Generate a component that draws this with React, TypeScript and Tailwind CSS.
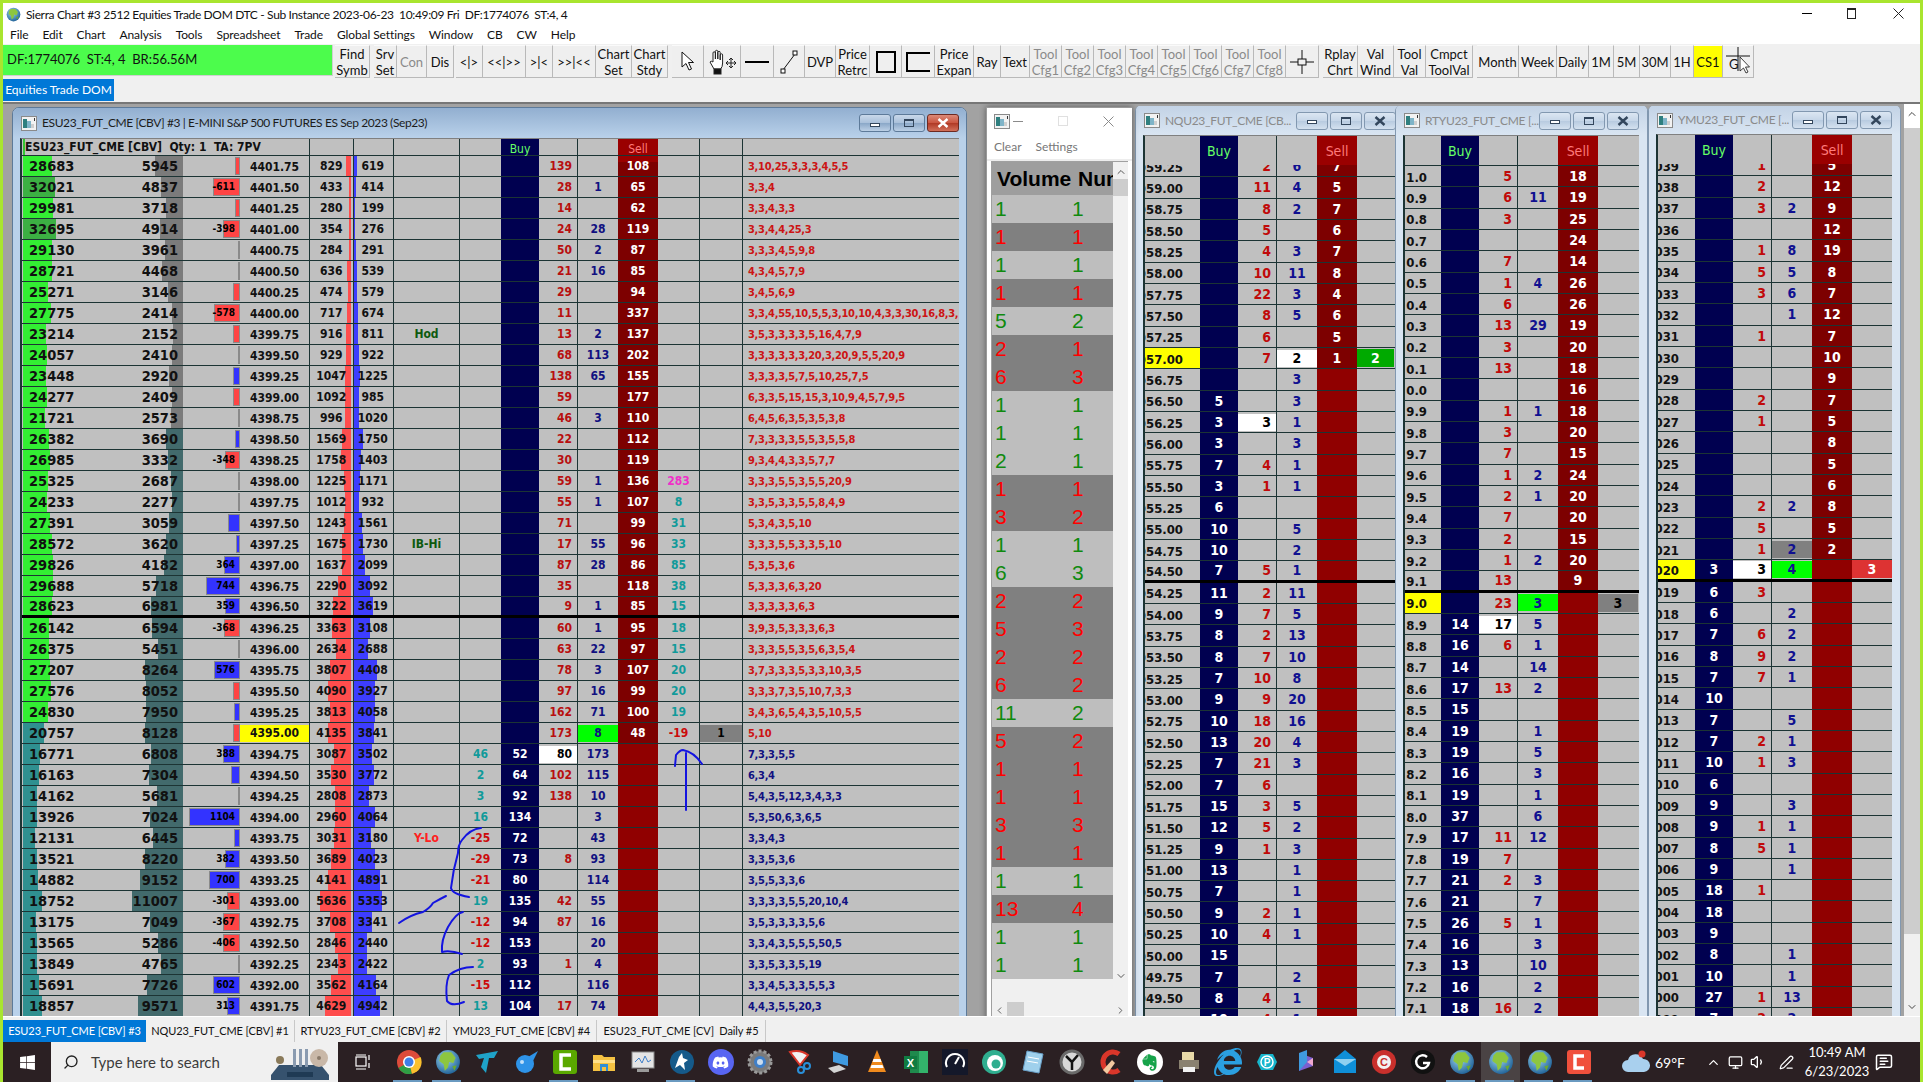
import React from "react";
import { FaWindows, FaDiscord, FaEvernote, FaInternetExplorer } from "react-icons/fa";
import { Search, ChevronUp, ChevronDown, ChevronLeft, ChevronRight, Volume1, Monitor, MessageSquareText, PenLine } from "lucide-react";

const mainRows = [
"28683|5945||r5|4401.75|829|619||||139||108|||3,10,25,3,3,3,4,5,5",
"32021|4837|-611|r27|4401.50|433|414||||28|1|65|||3,3,4",
"29981|3718||r5|4401.25|280|199||||14||62|||3,3,4,3,3",
"32695|4914|-398|r17|4401.00|354|276||||24|28|119|||3,3,4,4,25,3",
"29130|3961||b1|4400.75|284|291||||50|2|87|||3,3,3,4,5,9,8",
"28721|4468||r1|4400.50|636|539||||21|16|85|||4,3,4,5,7,9",
"25271|3146||r7|4400.25|474|579||||29||94|||3,4,5,6,9",
"27775|2414|-578|r26|4400.00|717|674||||11||337|||3,3,4,55,10,5,5,3,10,10,4,3,3,30,16,8,3,",
"23214|2152||r7|4399.75|916|811|Hod|||13|2|137|||3,5,3,3,3,3,5,16,4,7,9",
"24057|2410||r1|4399.50|929|922||||68|113|202|||3,3,3,3,3,3,20,3,20,9,5,5,20,9",
"23448|2920||b7|4399.25|1047|1225||||138|65|155|||3,3,3,3,5,7,5,10,25,7,5",
"24277|2409||r7|4399.00|1092|985||||59||177|||6,3,3,5,15,15,3,10,9,4,5,7,9,5",
"21721|2573||r1|4398.75|996|1020||||46|3|110|||6,4,5,6,3,5,3,5,3,8",
"26382|3690||b5|4398.50|1569|1750||||22||112|||7,3,3,3,3,5,5,3,5,5,8",
"26985|3332|-348|r15|4398.25|1758|1403||||30||119|||9,3,4,4,3,3,5,7,7",
"25325|2687||r1|4398.00|1225|1171||||59|1|136|283||3,3,3,5,5,3,5,5,20,9",
"24233|2277||r1|4397.75|1012|932||||55|1|107|8||3,3,5,3,3,5,5,8,4,9",
"27391|3059||b12|4397.50|1243|1561||||71||99|31||5,3,4,3,5,10",
"28572|3620||b4|4397.25|1675|1730|IB-Hi|||17|55|96|33||3,3,3,5,5,3,3,5,10",
"29826|4182|364|b16|4397.00|1637|2099||||87|28|86|85||5,3,5,3,6",
"29688|5718|744|b34|4396.75|2290|3092||||35||118|38||5,3,3,3,6,3,20",
"28623|6981|359|b15|4396.50|3222|3619||||9|1|85|15||3,3,3,3,3,6,3",
"26142|6594|-368|r16|4396.25|3363|3108||||60|1|95|18||3,9,3,5,3,3,3,6,3",
"26375|5451||b1|4396.00|2634|2688||||63|22|97|15||3,3,3,5,5,3,5,6,3,5,4",
"27207|8264|576|b26|4395.75|3807|4408||||78|3|107|20||3,7,3,3,3,5,3,3,10,3,5",
"27576|8052||r7|4395.50|4090|3927||||97|16|99|20||3,3,3,7,3,5,10,7,3,3",
"24830|7950||b6|4395.25|3813|4058||||162|71|100|19||3,4,3,6,5,4,3,5,10,5,5",
"20757|8128||r7|*4395.00|4135|3841||||173|g8|48|-19|x1|5,10",
"16771|6808|388|b17|4394.75|3087|3502||46|52|w80|173||||7,3,3,5,5",
"16163|7304||b9|4394.50|3530|3772||2|64|102|115||||6,3,4",
"14162|5681||r1|4394.25|2808|2873||3|92|138|10||||5,4,3,5,12,3,4,3,3",
"13926|7024|1104|b51|4394.00|2960|4064||16|134||3||||5,3,50,6,3,6,5",
"12131|6445||b6|4393.75|3031|3180|Y-Lo|-25|72||43||||3,3,4,3",
"13521|8220|382|b15|4393.50|3689|4023||-29|73|8|93||||3,3,5,3,6",
"14882|9152|700|b31|4393.25|4141|4891||-21|80||114||||3,5,5,3,3,6",
"18752|11007|-301|r13|4393.00|5636|5353||19|135|42|55||||3,3,3,3,5,5,20,10,4",
"13175|7049|-367|r17|4392.75|3708|3341||-12|94|87|16||||3,5,3,3,3,3,5,6",
"13565|5286|-406|r17|4392.50|2846|2440||-12|153||20||||3,3,4,3,5,5,5,50,5",
"13849|4765||b1|4392.25|2343|2422||2|93|1|4||||3,3,5,3,3,5,19",
"15691|7726|602|b27|4392.00|3562|4164||-15|112||116||||3,3,4,5,3,3,5,5,3",
"18857|9571|313|b13|4391.75|4629|4942||13|104|17|74||||4,4,3,5,5,20,3",
"||||||||||||||||",
];

const nq = ["059.25||2|6|7|","059.00||11|4|5|","058.75||8|2|7|","058.50||5||6|","058.25||4|3|7|","058.00||10|11|8|","057.75||22|3|4|","057.50||8|5|6|","057.25||6||5|","*057.00||7|w2|1|G2","056.75|||3||","056.50|5||3||","056.25|3|w3|1||","056.00|3||3||","055.75|7|4|1||","055.50|3|1|1||","055.25|6||||","055.00|10||5||","054.75|10||2||","054.50!|7|5|1||","054.25|11|2|11||","054.00|9|7|5||","053.75|8|2|13||","053.50|8|7|10||","053.25|7|10|8||","053.00|9|9|20||","052.75|10|18|16||","052.50|13|20|4||","052.25|7|21|3||","052.00|7|6|||","051.75|15|3|5||","051.50|12|5|2||","051.25|9|1|3||","051.00|13||1||","050.75|7||1||","050.50|9|2|1||","050.25|10|4|1||","050.00|15||||","049.75|7||2||","049.50|8|4|1||","049.25|10|4|1||"];
const rty = ["1.0||5||18|","0.9||6|11|19|","0.8||3||25|","0.7||||24|","0.6||7||14|","0.5||1|4|26|","0.4||6||26|","0.3||13|29|19|","0.2||3||20|","0.1||13||18|","0.0||||16|","9.9||1|1|18|","9.8||3||20|","9.7||7||15|","9.6||1|2|24|","9.5||2|1|20|","9.4||7||20|","9.3||2||15|","9.2||1|2|20|","9.1!||13||9|","*9.0||23|g3||X3","8.9|14|w17|5||","8.8|16|6|1||","8.7|14||14||","8.6|17|13|2||","8.5|15||||","8.4|19||1||","8.3|19||5||","8.2|16||3||","8.1|19||1||","8.0|37||6||","7.9|17|11|12||","7.8|19|7|||","7.7|21|2|3||","7.6|21||7||","7.5|26|5|1||","7.4|16||3||","7.3|13||10||","7.2|16||2||","7.1|18|16|2||","7.0|15||||"];
const ym = ["039||1||5|","038||2||12|","037||3|2|9|","036||||12|","035||1|8|19|","034||5|5|8|","033||3|6|7|","032|||1|12|","031||1||7|","030||||10|","029||||9|","028||2||7|","027||1||5|","026||||8|","025||||5|","024||||6|","023||2|2|8|","022||5||5|","021||1|x2|2|","*020!|3|w3|g4||R3","019|6|3|||","018|6||2||","017|7|6|2||","016|8|9|2||","015|7|7|1||","014|10||||","013|7||5||","012|7|2|1||","011|10|1|3||","010|6||||","009|9||3||","008|9|1|1||","007|8|5|1||","006|9||1||","005|18|1|||","004|18||||","003|9||||","002|8||1||","001|10||1||","000|27|1|13||","999|7|2|2||"];

const volRows = "1 1 g,1 1 r,1 1 g,1 1 r,5 2 g,2 1 r,6 3 r,1 1 g,1 1 g,2 1 g,1 1 r,3 2 r,1 1 g,6 3 g,2 2 r,5 3 r,2 2 r,6 2 r,11 2 g,5 2 r,1 1 r,1 1 r,3 3 r,1 1 r,1 1 g,13 4 r,1 1 g,1 1 g".split(",").map((s) => s.split(" "));

const DATA = "font-['DejaVu_Sans_Condensed','DejaVu_Sans',sans-serif] font-bold";

const Globe = ({ s = 16 }: { s?: number }) => (
  <svg width={s} height={s} viewBox="0 0 24 24" className="flex-none">
    <defs>
      <radialGradient id="gl" cx="40%" cy="35%" r="70%">
        <stop offset="0" stopColor="#9fd8ef" />
        <stop offset="1" stopColor="#1d5f96" />
      </radialGradient>
    </defs>
    <circle cx="12" cy="12" r="11" fill="url(#gl)" />
    <path d="M8 3 L15 3 L19 8 L17 13 L13 12 L12 17 L9 20 L8 14 L4 11 L5 6Z" fill="#8dc63f" />
    <path d="M16 16 L20 15 L18 20Z" fill="#6aa82f" />
  </svg>
);

const DocIcon = () => (
  <svg width="16" height="15" viewBox="0 0 16 15" className="flex-none">
    <rect x="0.5" y="0.5" width="15" height="14" fill="#f2f2f2" stroke="#8a8a8a" />
    <rect x="2" y="3" width="4" height="9" fill="#2f7f7f" />
    <rect x="6" y="5" width="4" height="7" fill="#7fb4c8" />
    <rect x="10" y="8" width="3" height="4" fill="#cfcfcf" />
    <rect x="13" y="2" width="1" height="3" fill="#333" />
  </svg>
);

function WinBtns({ active }: { active?: boolean }) {
  const base = "w-[32px] h-[18px] rounded-[3px] border flex items-center justify-center";
  const plain = active
    ? "border-[#5d7a99] bg-[linear-gradient(to_bottom,#c9d8ea_0%,#a9c0da_50%,#8ba8c8_52%,#bcd0e6_100%)]"
    : "border-[#8298b0] bg-[linear-gradient(to_bottom,#dbe6f2_0%,#c6d6e8_50%,#b8cbe0_52%,#d4e1ef_100%)]";
  const close = active
    ? "border-[#6d2a22] bg-[linear-gradient(to_bottom,#dc8a78_0%,#c9543f_50%,#b03a26_52%,#d2705a_100%)]"
    : plain;
  return (
    <div className="flex gap-[2px] flex-none">
      <div className={`${base} ${plain}`}><div className="w-[10px] h-[4px] border border-[#33465c] bg-white mt-[3px]" /></div>
      <div className={`${base} ${plain}`}><div className="w-[10px] h-[8px] border border-[#33465c] border-t-2" /></div>
      <div className={`${base} ${close}`}>
        <svg width="12" height="10" viewBox="0 0 12 10"><path d="M1.5 1 L10.5 9 M10.5 1 L1.5 9" stroke={active ? "#fff" : "#33465c"} strokeWidth="2.4" /></svg>
      </div>
    </div>
  );
}

function MainRow({ r, i }: { r: string; i: number }) {
  const f = r.split("|");
  const [bid, ask, lab, bar, price, v1, v2, note, c5, buy, tb, ta, sell, c11, c12, text] = f;
  const above = i < 28;
  const thick = i === 21;
  const line = "border-r border-[#1c3434]";
  const greenCl = i === 1 || i === 3 ? "bg-[#3cb043]" : i < 27 ? "bg-[#33ee33]" : "bg-[#2f9090]";
  const grayCl = i < 13 ? "bg-[#7b7b7b]" : "bg-[#426a6c]";
  const barW = bar ? Number(bar.slice(1)) : 0;
  const bidN = Number(bid) || 0;
  const askN = Number(ask) || 0;
  const v1N = Number(v1) || 0;
  const v2N = Number(v2) || 0;
  const yellow = price.startsWith("*");
  const noteCl = note === "Y-Lo" ? "text-[#ff2020]" : "text-[#0f5a0f]";
  const c5Cl = c5.startsWith("-") ? "text-[#cc0a0a]" : "text-[#109a9a]";
  const c11Cl = c11 === "283" ? "text-[#f030c8]" : c11.startsWith("-") ? "text-[#cc0a0a]" : "text-[#109a9a]";
  const askGreen = ta.startsWith("g");
  const bidWhite = tb.startsWith("w");
  return (
    <div className={`flex h-[21px] flex-none ${thick ? "border-b-[3px] border-black" : "border-b border-[#1c3434]"} text-[12px] leading-none text-[#111]`}>
      <div className="relative w-[161px] flex-none flex justify-between items-center pl-[7px] pr-[5px] text-[14.5px]">
        <div className={`absolute left-[1px] top-0 bottom-0 ${greenCl}`} style={{ width: bidN / 1000 }} />
        <div className={`absolute right-0 top-0 bottom-0 ${grayCl}`} style={{ width: askN / 215 }} />
        <span className="relative">{bid}</span>
        <span className="relative">{ask}</span>
      </div>
      <div className="relative w-[57px] flex-none flex justify-end items-center pr-[5px] text-[10px] text-black">
        {bar && (
          <div className={`absolute right-0 top-[1px] bottom-[1px] border border-[#8a8a8a] ${bar[0] === "r" ? "bg-[#ff4444]" : "bg-[#3333ff]"}`} style={{ width: barW }} />
        )}
        <span className="relative">{lab}</span>
      </div>
      <div className="w-[69px] flex-none flex items-center justify-center pt-[2px]">
        {yellow ? <div className="w-full h-[17px] mb-[2px] bg-[#ffff00] flex items-center justify-center">{price.slice(1)}</div> : price}
      </div>
      <div className={`relative w-[85px] flex-none flex items-center ${line} border-l`}>
        {v1 && <div className="absolute right-[42px] top-0 bottom-0 bg-[#ff4d4d]" style={{ width: v1N / 180 }} />}
        {v2 && <div className="absolute left-[44px] top-0 bottom-0 bg-[#3d3dff]" style={{ width: v2N / 190 }} />}
        <div className="absolute left-[43px] top-0 bottom-0 w-px bg-[#1c3434]" />
        <span className="relative w-[43px] text-center">{v1}</span>
        <span className="relative w-[41px] text-center">{v2}</span>
      </div>
      <div className={`w-[66px] flex-none flex items-center justify-center ${line} ${noteCl}`}>{note}</div>
      <div className={`w-[41px] flex-none flex items-center justify-center ${c5Cl}`}>{c5}</div>
      <div className="w-[38px] flex-none flex items-center justify-center bg-[#000050] text-white">{buy}</div>
      <div className={`w-[39px] flex-none flex items-center justify-end ${line} text-[#b80f0f]`}>
        {bidWhite ? <div className="w-full h-[17px] bg-white text-black flex items-center justify-end pr-[5px]">{tb.slice(1)}</div> : <span className="pr-[5px]">{tb}</span>}
      </div>
      <div className="w-[40px] flex-none flex items-center justify-center text-[#101080]">
        {askGreen ? <div className="w-full h-[17px] bg-[#00ff00] flex items-center justify-center">{ta.slice(1)}</div> : ta}
      </div>
      <div className={`w-[40px] flex-none flex items-center justify-center text-white ${i === 0 ? "bg-[linear-gradient(to_bottom,#9a0000_6px,#7d0000_6px)]" : sell ? "bg-[#7d0000]" : "bg-[#900000]"}`}>{sell}</div>
      <div className={`w-[42px] flex-none flex items-center justify-center ${line} ${c11Cl}`}>{c11}</div>
      <div className={`w-[43px] flex-none flex items-center justify-center ${line}`}>
        {c12 && <div className="w-full h-[17px] bg-[#808080] text-black flex items-center justify-center">{c12.slice(1)}</div>}
      </div>
      <div className={`flex-1 min-w-0 pl-[5px] flex items-center overflow-hidden whitespace-nowrap text-[11px] tracking-[-0.3px] ${above ? "text-[#cc1414]" : "text-[#101080]"}`}>{text}</div>
    </div>
  );
}

function MainWindow() {
  return (
    <div className="absolute left-[9px] top-[3px] w-[955px] h-[911px] rounded-t-[7px] border border-[#5d7a99] bg-[#b9d1ea] flex flex-col overflow-hidden">
      <div className="h-[30px] flex-none flex items-center pl-[8px] pr-[7px] bg-[linear-gradient(to_bottom,#92afd0,#b9d1ea)]">
        <DocIcon />
        <span className="ml-[5px] text-[12px] tracking-[-0.4px] text-[#1c1c1c] whitespace-nowrap flex-1">ESU23_FUT_CME [CBV] #3 | E-MINI S&amp;P 500 FUTURES ES Sep 2023 (Sep23)</span>
        <WinBtns active />
      </div>
      <div className={`flex-1 min-h-0 ml-[7px] mr-[7px] border-l-2 border-t border-l-[#1c3434] border-t-[#808080] bg-[#c0c0c0] overflow-hidden ${DATA}`}>
        <div className="flex h-[17px] border-b border-[#1c3434] text-[12px] leading-none">
          <div className="w-[287px] flex-none flex items-center pl-[3px] text-[#111] whitespace-pre relative">
            <div className="absolute left-[1px] top-0 bottom-0 w-[2px] bg-[#33c733]" />
            ESU23_FUT_CME [CBV]  Qty: 1  TA: 7PV
          </div>
          <div className="w-[85px] flex-none border-x border-[#1c3434] relative"><div className="absolute left-[43px] top-0 bottom-0 w-px bg-[#1c3434]" /></div>
          <div className="w-[66px] flex-none border-r border-[#1c3434]" />
          <div className="w-[41px] flex-none" />
          <div className="w-[38px] flex-none bg-[#000050] flex items-end justify-center text-[#66ff66] font-normal pb-[0px]">Buy</div>
          <div className="w-[39px] flex-none border-r border-[#1c3434]" />
          <div className="w-[40px] flex-none" />
          <div className="w-[40px] flex-none bg-[#9a0000] flex items-end justify-center text-[#ff7a7a] font-normal">Sell</div>
          <div className="w-[42px] flex-none border-r border-[#1c3434]" />
          <div className="w-[43px] flex-none border-r border-[#1c3434]" />
        </div>
        {mainRows.map((r, i) => <MainRow key={i} r={r} i={i} />)}
      </div>
    </div>
  );
}

type DomProps = {
  pos: string;
  title: string;
  titleH: string;
  priceW: string;
  pricePr: string;
  headH: string;
  clip: string;
  rows: string[];
  prefix: string;
  lastW: string;
};

function DomRow({ r, p }: { r: string; p: DomProps }) {
  const [rawPrice, buy, bid, ask, sell, last] = r.split("|");
  const thick = rawPrice.endsWith("!");
  const yellow = rawPrice.startsWith("*");
  const price = rawPrice.replace("!", "").replace("*", "");
  const askCl = ask.startsWith("g") ? "bg-[#00ff00] h-[17px] w-full" : ask.startsWith("x") ? "bg-[#808080] h-[17px] w-full" : "";
  const askV = ask.startsWith("g") || ask.startsWith("x") ? ask.slice(1) : ask;
  const lastCl = last.startsWith("G") ? "bg-[#00aa00] text-white" : last.startsWith("X") ? "bg-[#808080] text-black" : last.startsWith("R") ? "bg-[#dd3333] text-white" : "";
  return (
    <div className={`flex h-[21.33px] flex-none leading-none text-[14px] ${thick ? "border-b-[3px] border-black" : "border-b border-[#1c3434]"}`}>
      <div className={`${p.priceW} ${p.pricePr} flex-none flex justify-end items-center overflow-hidden whitespace-nowrap text-[#111] text-[13px] pt-[2px] ${yellow ? "bg-[#ffff00]" : ""}`}>{p.prefix}{price}</div>
      <div className="w-[38px] flex-none flex items-center justify-center bg-[#000050] text-white">{buy}</div>
      <div className="w-[39px] flex-none flex items-center justify-end border-r border-[#1c3434] text-[#c00a0a]">
        {bid.startsWith("w") ? <div className="w-full h-[17px] bg-white text-black flex items-center justify-end pr-[5px]">{bid.slice(1)}</div> : <span className="pr-[5px]">{bid}</span>}
      </div>
      <div className="w-[40px] flex-none flex items-center justify-center text-[#101090]">
        {askCl ? <div className={`${askCl} flex items-center justify-center`}>{askV}</div> : ask.startsWith("w") ? <div className="w-full h-[17px] bg-white text-black flex items-center justify-center">{ask.slice(1)}</div> : ask}
      </div>
      <div className={`w-[40px] flex-none flex items-center justify-center text-white ${sell ? "bg-[#7d0000]" : "bg-[#900000]"}`}>{sell}</div>
      <div className={`${p.lastW} flex-none flex items-center justify-center`}>
        {last && <div className={`w-full h-[18px] flex items-center justify-center ${lastCl}`}>{last.slice(1)}</div>}
      </div>
    </div>
  );
}

function DomWindow(p: DomProps) {
  return (
    <div className={`absolute ${p.pos} top-[2px] h-[912px] rounded-t-[5px] border-x border-[#8298b0] bg-[#d9e5f2] flex flex-col overflow-hidden`}>
      <div className={`${p.titleH} flex-none flex items-center pl-[8px] pr-[8px] bg-[linear-gradient(to_bottom,#c3d3e6,#d9e5f2)]`}>
        <DocIcon />
        <span className="ml-[5px] text-[12px] tracking-[-0.3px] text-[#8a8a8a] whitespace-nowrap flex-1 overflow-hidden">{p.title}</span>
        <WinBtns />
      </div>
      <div className={`flex-1 min-h-0 ml-[7px] mr-[8px] border-l-2 border-t border-l-[#1c3434] border-t-[#808080] bg-[#c0c0c0] overflow-hidden ${DATA}`}>
        <div className={`flex ${p.headH} flex-none text-[14px] relative z-10`}>
          <div className={`${p.priceW} flex-none bg-[#c0c0c0]`} />
          <div className="w-[38px] flex-none bg-[#000050] flex items-end justify-center pb-[3px] text-[#66ff66] font-normal">Buy</div>
          <div className="w-[39px] flex-none bg-[#c0c0c0] border-r border-[#1c3434]" />
          <div className="w-[40px] flex-none bg-[#c0c0c0]" />
          <div className="w-[40px] flex-none bg-[#9a0000] flex items-end justify-center pb-[3px] text-[#ff7a7a] font-normal">Sell</div>
          <div className="flex-1 bg-[#c0c0c0]" />
        </div>
        <div className={p.clip}>
          {p.rows.map((r, i) => <DomRow key={i} r={r} p={p} />)}
        </div>
      </div>
    </div>
  );
}

function VolPanel() {
  return (
    <div className="absolute left-[983px] top-[3px] w-[146px] h-[914px] bg-white border-l border-t border-[#9a9a9a] shadow-[0_0_6px_rgba(0,0,0,0.45)] z-30 flex flex-col">
      <div className="h-[26px] flex-none flex items-center pl-[7px] relative">
        <DocIcon />
        <div className="w-[10px] h-px bg-[#8a8a8a] ml-[3px]" />
        <div className="absolute left-[71px] top-[8px] w-[10px] h-[10px] border border-[#e0e0e0]" />
        <svg className="absolute left-[116px] top-[8px]" width="11" height="11" viewBox="0 0 11 11"><path d="M0.5 0.5 L10.5 10.5 M10.5 0.5 L0.5 10.5" stroke="#8a8a8a" /></svg>
      </div>
      <div className="h-[25px] flex-none flex items-center gap-[14px] pl-[7px] text-[12px] text-[#777]">
        <span>Clear</span><span>Settings</span>
      </div>
      <div className="flex-none h-[2px] bg-[#ededed]" />
      <div className="flex-1 min-h-0 flex mx-[4px] border-t border-l border-[#a0a0a0] font-['Liberation_Sans',sans-serif] overflow-hidden bg-[#f0f0f0]">
        <div className="w-[121px] flex-none flex flex-col overflow-hidden">
          <div className="h-[33px] flex-none bg-[#9e9e9e] flex items-center pl-[5px] text-[21px] font-bold text-black whitespace-nowrap">
            <span className="w-[81px] flex-none">Volume</span><span>Number</span>
          </div>
          {volRows.map((v, i) => (
            <div key={i} className={`h-[28px] flex-none flex items-center text-[21px] ${v[2] === "g" ? "bg-[#bebebe] text-[#0f8a0f]" : "bg-[#808080] text-[#ff0000]"}`}>
              <span className="w-[80px] flex-none pl-[3px]">{v[0]}</span><span>{v[1]}</span>
            </div>
          ))}
          <div className="flex-1" />
          <div className="h-[16px] flex-none bg-[#f0f0f0] flex items-center">
            <ChevronLeft size={11} className="text-[#555] ml-[2px]" />
            <div className="w-[17px] h-full bg-[#cdcdcd] ml-[2px]" />
          </div>
        </div>
        <div className="flex-1 flex flex-col items-center bg-[#f0f0f0]">
          <ChevronUp size={12} className="text-[#555] mt-[4px]" />
          <div className="w-full h-[17px] bg-[#cdcdcd] mt-[1px]" />
          <div className="flex-1" />
          <ChevronDown size={12} className="text-[#555] mb-[20px]" />
          <div className="h-[16px] flex items-center"><ChevronRight size={11} className="text-[#555]" /></div>
        </div>
      </div>
      <div className="h-[3px] flex-none" />
    </div>
  );
}

const toolBtn = "flex-none h-[33px] flex flex-col items-center justify-center text-center leading-[16px] text-[13px] bg-[#efefef] border-r border-b border-[#b9b9b9] border-t border-t-[#fafafa]";

function Btn({ w, a, b, dim, extra }: { w: string; a: string; b?: string; dim?: boolean; extra?: string }) {
  return (
    <div className={`${toolBtn} ${w} ${dim ? "text-[#8a8a8a]" : "text-[#111]"} ${extra || ""}`}>
      <span>{a}</span>
      {b && <span>{b}</span>}
    </div>
  );
}

function IconBtn({ w, children, extra }: { w: string; children: React.ReactNode; extra?: string }) {
  return <div className={`${toolBtn} ${w} ${extra || ""}`}>{children}</div>;
}

function Toolbar() {
  return (
    <div className="h-[34px] flex-none flex bg-[#f0f0f0] items-start pt-[1px]">
      <div className="w-[330px] h-[31px] flex-none bg-[#4cfc4c] border-b border-r border-[#d0d0d0] flex items-center pl-[4px] text-[13px] text-[#111] whitespace-pre">DF:1774076  ST:4, 4  BR:56.56M</div>
      <Btn w="w-[35px] ml-[2px]" a="Find" b="Symb" />
      <Btn w="w-[23px] ml-[4px]" a="Srv" b="Set" />
      <Btn w="w-[30px]" a="Con" dim />
      <Btn w="w-[27px]" a="Dis" />
      <Btn w="w-[27px] ml-[2px]" a="<|>" />
      <Btn w="w-[43px]" a="<<|>>" />
      <Btn w="w-[27px]" a=">|<" />
      <Btn w="w-[43px]" a=">>|<<" />
      <Btn w="w-[36px]" a="Chart" b="Set" />
      <Btn w="w-[36px]" a="Chart" b="Stdy" />
      <IconBtn w="w-[32px] ml-[4px]">
        <svg width="16" height="22" viewBox="0 0 16 22"><path d="M2 1 L2 16 L6 12.5 L9 19 L11.5 18 L8.5 11.5 L13.5 11.5Z" fill="#fff" stroke="#111" strokeWidth="1" /></svg>
      </IconBtn>
      <IconBtn w="w-[37px]">
        <svg width="32" height="26" viewBox="0 0 32 26" fill="none" stroke="#222"><path d="M7 13 V4 a1.2 1.2 0 0 1 2.4 0 V10 V2.5 a1.2 1.2 0 0 1 2.4 0 V10 V3.5 a1.2 1.2 0 0 1 2.4 0 V11 V6 a1.2 1.2 0 0 1 2.4 0 V14 q0 4 -2 6 H8 L4 13 q1 -1.6 3 0Z" fill="#fff" /><rect x="8" y="20" width="7" height="5" fill="#111" /><path d="M20 14 H30 M25 9 V19 M20 14 l2 -2 M20 14 l2 2 M30 14 l-2 -2 M30 14 l-2 2 M25 9 l-2 2 M25 9 l2 2 M25 19 l-2 -2 M25 19 l2 -2" /></svg>
      </IconBtn>
      <IconBtn w="w-[33px]"><div className="w-[24px] h-[2px] bg-black" /></IconBtn>
      <IconBtn w="w-[31px]">
        <svg width="22" height="26" viewBox="0 0 22 26" fill="none" stroke="#111"><path d="M5 21 L17 5" /><rect x="3" y="20" width="4" height="4" fill="#fff" /><rect x="15" y="2" width="4" height="4" fill="#fff" /></svg>
      </IconBtn>
      <Btn w="w-[31px]" a="DVP" />
      <Btn w="w-[34px]" a="Price" b="Retrc" />
      <IconBtn w="w-[32px]"><div className="w-[20px] h-[22px] border-2 border-black" /></IconBtn>
      <IconBtn w="w-[33px]"><div className="w-[24px] h-[20px] border-t-2 border-b-2 border-l-2 border-black" /></IconBtn>
      <Btn w="w-[39px]" a="Price" b="Expan" />
      <Btn w="w-[27px]" a="Ray" />
      <Btn w="w-[29px]" a="Text" />
      {[1, 2, 3, 4, 5, 6, 7, 8].map((n) => <Btn key={n} w="w-[32px]" a="Tool" b={`Cfg${n}`} dim />)}
      <IconBtn w="w-[33px]">
        <svg width="24" height="26" viewBox="0 0 24 26" stroke="#111" fill="none"><path d="M0 13 H24 M12 1 V25" /><rect x="8" y="10" width="8" height="6" fill="#efefef" /></svg>
      </IconBtn>
      <Btn w="w-[35px] ml-[4px]" a="Rplay" b="Chrt" />
      <Btn w="w-[36px]" a="Val" b="Wind" />
      <Btn w="w-[32px]" a="Tool" b="Val" />
      <Btn w="w-[47px]" a="Cmpct" b="ToolVal" />
      <Btn w="w-[42px] ml-[4px]" a="Month" />
      <Btn w="w-[38px]" a="Week" />
      <Btn w="w-[32px]" a="Daily" />
      <Btn w="w-[25px]" a="1M" />
      <Btn w="w-[26px]" a="5M" />
      <Btn w="w-[31px]" a="30M" />
      <Btn w="w-[23px]" a="1H" />
      <Btn w="w-[29px]" a="CS1" extra="bg-[#ffff00]" />
      <div className={`${toolBtn} w-[31px] relative`}>
        <span className="absolute left-[6px] top-[10px]">G</span>
        <svg className="absolute left-[3px] top-[1px]" width="26" height="30" viewBox="0 0 26 30" fill="none"><path d="M0 9 H24 M12 0 V24" stroke="#111" /><path d="M14 10 V24 L17.5 21 L20 26 L22 25 L19.5 20 L23.5 20Z" fill="#fff" stroke="#111" strokeWidth="0.8" /></svg>
      </div>
    </div>
  );
}

const I = ({ children }: { children: React.ReactNode }) => (
  <svg width="26" height="26" viewBox="0 0 26 26">{children}</svg>
);

const taskIcons: React.ReactNode[] = [
  <I><circle cx="13" cy="13" r="12" fill="#dd4b3a" /><path d="M13 13 L2.5 19 A12 12 0 0 0 16 24.7Z" fill="#2f9e44" /><path d="M13 13 L16 24.7 A12 12 0 0 0 24.6 8Z" fill="#fbc02d" /><circle cx="13" cy="13" r="6" fill="#fff" /><circle cx="13" cy="13" r="4.5" fill="#3f7fe8" /></I>,
  <Globe s={26} />,
  <I><path d="M2 6 L24 2 L20 9 L15 9 L12 24 L7 18 L10 9 L5 10Z" fill="#1fa3c8" /></I>,
  <I><circle cx="12" cy="15" r="9" fill="#2e93e8" /><path d="M15 8 L25 2 L20 12Z" fill="#2e93e8" /><circle cx="9" cy="13" r="2" fill="#bfe0fa" /></I>,
  <I><rect x="1" y="1" width="24" height="24" rx="3" fill="#5aa800" /><path d="M19 6 H9 V20 H19" fill="none" stroke="#fff" strokeWidth="3.5" /></I>,
  <I><path d="M2 6 H11 L13 8 H24 V22 H2Z" fill="#f5c242" /><rect x="2" y="11" width="22" height="3" fill="#ffe08a" /><rect x="9" y="15" width="8" height="7" fill="#2f8fd8" /><rect x="11" y="18" width="4" height="4" fill="#f5c242" /></I>,
  <I><rect x="2" y="3" width="22" height="16" fill="#e4e4e4" stroke="#8a8a8a" /><path d="M5 13 l4 -4 l3 5 l3 -7 l3 6 l3 -2" stroke="#3f7fc8" fill="none" /><rect x="7" y="20" width="12" height="3" fill="#9a9a9a" /></I>,
  <I><circle cx="13" cy="13" r="12" fill="#155a8a" /><path d="M6 19 L10 8 L13 4 L14 9 L19 11 L15 14 L16 21 L11 16Z" fill="#fff" /></I>,
  <div className="w-[26px] h-[26px] rounded-full bg-[#5865f2] flex items-center justify-center"><FaDiscord size={17} color="#fff" /></div>,
  <I><circle cx="13" cy="13" r="11" fill="#7a7a7a" stroke="#9a9a9a" strokeWidth="3" strokeDasharray="3 2" /><circle cx="13" cy="13" r="6" fill="#3f7fc8" /><circle cx="13" cy="13" r="3" fill="#cde" /></I>,
  <I><path d="M4 3 Q14 0 22 6 L14 16Z" fill="#f2f2f2" stroke="#d9362a" strokeWidth="2" /><circle cx="15" cy="21" r="3" fill="none" stroke="#2a8fd8" strokeWidth="2" /><circle cx="21" cy="17" r="3" fill="none" stroke="#2a8fd8" strokeWidth="2" /></I>,
  <I><path d="M8 2 L23 7 V17 L8 13Z" fill="#3f9ae0" /><path d="M3 19 L14 16 L21 20 L9 24Z" fill="#d4d4d4" /></I>,
  <I><path d="M13 1 L22 23 H4Z" fill="#f08a1d" /><path d="M9.5 10 H16.5 L17.5 13 H8.5Z M7.5 16 H18.5 L19.5 19 H6.5Z" fill="#fff" /></I>,
  <I><rect x="7" y="2" width="18" height="22" fill="#1f8a4d" /><rect x="16" y="2" width="9" height="22" fill="#33b36b" /><rect x="1" y="7" width="13" height="13" fill="#107c41" /><text x="7.5" y="17.5" fontSize="11" fontWeight="700" fill="#fff" textAnchor="middle" fontFamily="Liberation Sans">X</text></I>,
  <I><rect x="0" y="0" width="26" height="26" fill="#14182a" /><path d="M5 18 A9 9 0 1 1 21 18" fill="none" stroke="#fff" strokeWidth="2" /><path d="M13 15 L17 8" stroke="#fff" strokeWidth="2" /></I>,
  <I><circle cx="13" cy="13" r="12" fill="#2fae8f" /><circle cx="14" cy="14" r="8" fill="#fff" /><circle cx="15" cy="15" r="4.5" fill="#2fae8f" /></I>,
  <I><path d="M7 2 L23 5 L19 24 L3 21Z" fill="#9fd0ec" stroke="#6aa0c8" /><path d="M8 8 L19 10 M7 12 L18 14" stroke="#fff" /></I>,
  <I><circle cx="13" cy="13" r="11" fill="#d8d8d8" stroke="#6a6a6a" strokeWidth="3" /><path d="M13 13 L7 7 M13 13 L19 6 M13 13 V21" stroke="#111" strokeWidth="2.5" /></I>,
  <I><path d="M21 5 A10 10 0 1 0 21 21" fill="none" stroke="#d9362a" strokeWidth="5" /><path d="M5 21 L14 11 L17 14 L9 25Z" fill="#f2c9a0" /></I>,
  <div className="w-[26px] h-[26px] rounded-full bg-white flex items-center justify-center"><FaEvernote size={19} color="#17a34a" /></div>,
  <I><rect x="6" y="3" width="12" height="8" fill="#e8d9a8" /><rect x="3" y="11" width="20" height="9" fill="#8a8170" /><rect x="7" y="18" width="12" height="5" fill="#f2f2f2" /></I>,
  <FaInternetExplorer size={28} color="#2b9fe0" />,
  <I><path d="M3 13 L7 5 H19 L23 13 L19 21 H7Z" fill="#16b5cc" /><circle cx="13" cy="13" r="6" fill="none" stroke="#fff" strokeWidth="1.5" /><text x="13" y="17" fontSize="10" fontWeight="700" fill="#fff" textAnchor="middle" fontFamily="Liberation Sans">P</text></I>,
  <I><path d="M6 4 L20 9 V17 L6 22Z" fill="#7a5fd0" /><path d="M6 4 L14 1 V13 L6 22Z" fill="#3f9ae0" /><path d="M20 9 L14 13 L20 17Z" fill="#f0a8d0" /></I>,
  <I><path d="M2 10 L13 1 L24 10 V24 H2Z" fill="#0f8fd8" /><path d="M2 10 L13 17 L24 10" fill="#8fd0f0" /></I>,
  <I><circle cx="13" cy="13" r="12" fill="#c9302c" /><circle cx="13" cy="13" r="7" fill="#f2f2f2" /><text x="13" y="17" fontSize="11" fontWeight="700" fill="#c9302c" textAnchor="middle" fontFamily="Liberation Sans">C</text></I>,
  <I><circle cx="13" cy="13" r="12" fill="#111" /><path d="M17 8 A6.5 6.5 0 1 0 19 14 H13" fill="none" stroke="#fff" strokeWidth="2.4" /></I>,
  <Globe s={26} />,
  <Globe s={26} />,
  <Globe s={26} />,
  <I><rect x="1" y="1" width="24" height="24" rx="3" fill="#f0503c" /><path d="M18 7 H9 V19 H18" fill="none" stroke="#fff" strokeWidth="3.5" /></I>,
];
const running = [0, 1, 4, 7, 19, 27, 28, 29, 30];

function Taskbar() {
  return (
    <div className="h-[40px] flex-none flex bg-[#2b2023] text-white">
      <div className="w-[48px] flex-none flex items-center justify-center"><FaWindows size={17} color="#fff" /></div>
      <div className="w-[287px] flex-none bg-[#f0f0f0] flex items-center pl-[12px] relative">
        <Search size={16} className="text-[#222] -scale-x-100" />
        <span className="ml-[12px] text-[15px] text-[#3c3c3c]">Type here to search</span>
        <svg className="absolute left-[218px] top-[3px]" width="62" height="36" viewBox="0 0 62 36">
          <path d="M2 30 L10 20 H52 L60 30 V35 H2Z" fill="#36526e" />
          <rect x="24" y="4" width="3" height="18" fill="#8a9bb0" /><rect x="30" y="4" width="3" height="18" fill="#8a9bb0" /><rect x="36" y="4" width="3" height="18" fill="#8a9bb0" />
          <circle cx="50" cy="13" r="9" fill="#c9b8a8" /><circle cx="50" cy="13" r="2" fill="#8a7a6a" />
          <circle cx="11" cy="15" r="4" fill="#8a7a5a" />
          <rect x="18" y="27" width="26" height="5" fill="#1f3a54" />
        </svg>
      </div>
      <div className="w-[51px] flex-none flex items-center justify-center">
        <svg width="17" height="16" viewBox="0 0 17 16" fill="none" stroke="#fff" strokeWidth="1.2"><rect x="1" y="3" width="10" height="9" /><path d="M1 1 H11 M1 15 H11 M14 1 V6 M14 9 V14" /></svg>
      </div>
      <div className="flex flex-none">
        {taskIcons.map((ic, i) => (
          <div key={i} className={`w-[39px] h-[40px] flex-none flex items-center justify-center relative ${i === 28 ? "bg-[#4a4344]" : ""}`}>
            {ic}
            {running.includes(i) && <div className="absolute bottom-0 left-[4px] right-[6px] h-[2px] bg-[#6a9ac0]" />}
          </div>
        ))}
      </div>
      <div className="flex-1 flex items-center pl-[24px] text-[14px] min-w-0">
        <svg width="28" height="28" viewBox="0 0 28 28" className="flex-none"><path d="M6 24 a6 6 0 0 1 0 -12 a8 8 0 0 1 15 -1 a6 6 0 0 1 1 13Z" fill="#a9d0ee" /><circle cx="20" cy="6" r="3.5" fill="#d9362a" /></svg>
        <span className="ml-[5px] w-[40px] flex-none">69°F</span>
        <ChevronUp size={15} className="ml-[11px] flex-none" />
        <Monitor size={15} className="ml-[7px] flex-none" />
        <Volume1 size={16} className="ml-[7px] flex-none" />
        <PenLine size={15} className="ml-[13px] flex-none" />
        <div className="ml-[13px] w-[60px] flex-none flex flex-col items-center leading-[19px] text-[13px]">
          <span>10:49 AM</span>
          <span>6/23/2023</span>
        </div>
        <MessageSquareText size={18} className="ml-[8px] flex-none" />
      </div>
    </div>
  );
}

const menus = ["File", "Edit", "Chart", "Analysis", "Tools", "Spreadsheet", "Trade", "Global Settings", "Window", "CB", "CW", "Help"];
const bottomTabs: [string, string][] = [
  ["ESU23_FUT_CME [CBV] #3", "w-[143px] bg-[#0078d7] text-white"],
  ["NQU23_FUT_CME [CBV] #1", "w-[149px] text-[#111] border-r border-[#c8c8c8]"],
  ["RTYU23_FUT_CME [CBV] #2", "w-[152px] text-[#111] border-r border-[#c8c8c8]"],
  ["YMU23_FUT_CME [CBV] #4", "w-[150px] text-[#111] border-r border-[#c8c8c8]"],
  ["ESU23_FUT_CME [CV]  Daily #5", "w-[169px] text-[#111] border-r border-[#c8c8c8]"],
];

export default function App() {
  return (
    <div className="relative w-[1923px] h-[1082px] overflow-hidden bg-[#a9e52f] pt-[3px] px-[3px] flex flex-col font-['Lato','Noto_Sans',sans-serif] text-[13px] text-[#111]">
      <div className="h-[23px] flex-none bg-white flex items-center pl-[3px] relative">
        <Globe s={15} />
        <span className="ml-[5px] whitespace-pre text-[12px] tracking-[-0.35px]">Sierra Chart #3 2512 Equities Trade DOM DTC - Sub Instance 2023-06-23  10:49:09 Fri  DF:1774076  ST:4, 4</span>
        <div className="absolute left-[1799px] top-[10px] w-[10px] h-px bg-black" />
        <div className="absolute left-[1844px] top-[5px] w-[9px] h-[11px] border border-[#222] border-t-2" />
        <svg className="absolute left-[1890px] top-[5px]" width="11" height="11" viewBox="0 0 11 11"><path d="M0.5 0.5 L10.5 10.5 M10.5 0.5 L0.5 10.5" stroke="#222" /></svg>
      </div>
      <div className="h-[18px] flex-none bg-white flex items-center gap-[14px] pl-[7px] text-[12px] tracking-[-0.1px]">
        {menus.map((m) => <span key={m}>{m}</span>)}
      </div>
      <Toolbar />
      <div className="h-[24px] flex-none bg-[#f0f0f0] pt-[1px]">
        <div className="w-[111px] h-[22px] bg-[#0078d7] text-white text-[12px] flex items-center justify-center whitespace-nowrap">Equities Trade DOM</div>
      </div>
      <div className="relative h-[914px] flex-none bg-[#a2a2a2] border-t-2 border-[#777] overflow-hidden">
        <MainWindow />
        <DomWindow pos="left-[1132px] w-[270px] z-10" title="NQU23_FUT_CME [CB..." titleH="h-[29px]" priceW="w-[55px]" pricePr="pr-[17px]" headH="h-[29px]" clip="-mt-[9px]" rows={nq} prefix="15" lastW="w-[37px]" />
        <DomWindow pos="left-[1392px] w-[253px] z-20" title="RTYU23_FUT_CME [..." titleH="h-[29px]" priceW="w-[36px]" pricePr="pr-[14px]" headH="h-[30px] border-b border-[#1c3434]" clip="" rows={rty} prefix="" lastW="w-[40px]" />
        <DomWindow pos="left-[1645px] w-[253px] z-20" title="YMU23_FUT_CME [..." titleH="h-[28px]" priceW="w-[37px]" pricePr="pr-[16px]" headH="h-[29px]" clip="-mt-[9px]" rows={ym} prefix="34" lastW="w-[40px]" />
        <VolPanel />
        <div className="absolute left-[1901px] top-[0px] w-[16px] h-full bg-[#f0f0f0] flex flex-col items-center z-20">
          <div className="h-[24px] w-full flex-none bg-white flex justify-center pt-[4px]"><ChevronUp size={12} className="text-[#444]" /></div>
          <div className="h-[806px] w-full flex-none bg-[#cdcdcd]" />
          <div className="flex-1" />
          <ChevronDown size={12} className="text-[#444] mb-[3px]" />
        </div>
      </div>
      <div className="h-[26px] flex-none bg-[#f0f0f0] pt-[3px] flex items-stretch border-t border-[#fff]">
        {bottomTabs.map(([t, c]) => (
          <div key={t} className={`${c} flex-none flex items-center justify-center whitespace-pre text-[11px] tracking-[-0.1px]`}>{t}</div>
        ))}
      </div>
      <Taskbar />
      <svg className="absolute left-0 top-0 pointer-events-none z-40" width="1923" height="1082" viewBox="0 0 1923 1082" fill="none" stroke="#1414e0" strokeWidth="2" strokeLinejoin="round" strokeLinecap="round">
        <path d="M481 828 Q470 829 462 840 Q458 845 458 853 Q453 870 451 888 Q452 894 469 897" />
        <path d="M399 923 Q410 915 423 912 Q430 908 433 903 Q440 899 446 896" />
        <path d="M463 912 Q456 913 448 927 Q441 940 442 952 Q450 950 462 954" />
        <path d="M473 967 Q460 967 449 975 Q445 985 447 1001 Q452 1007 464 1002" />
        <path d="M686 810 V753" />
        <path d="M675 766 L676 755 Q680 750 683 750 Q694 752 702 764" />
      </svg>
    </div>
  );
}
